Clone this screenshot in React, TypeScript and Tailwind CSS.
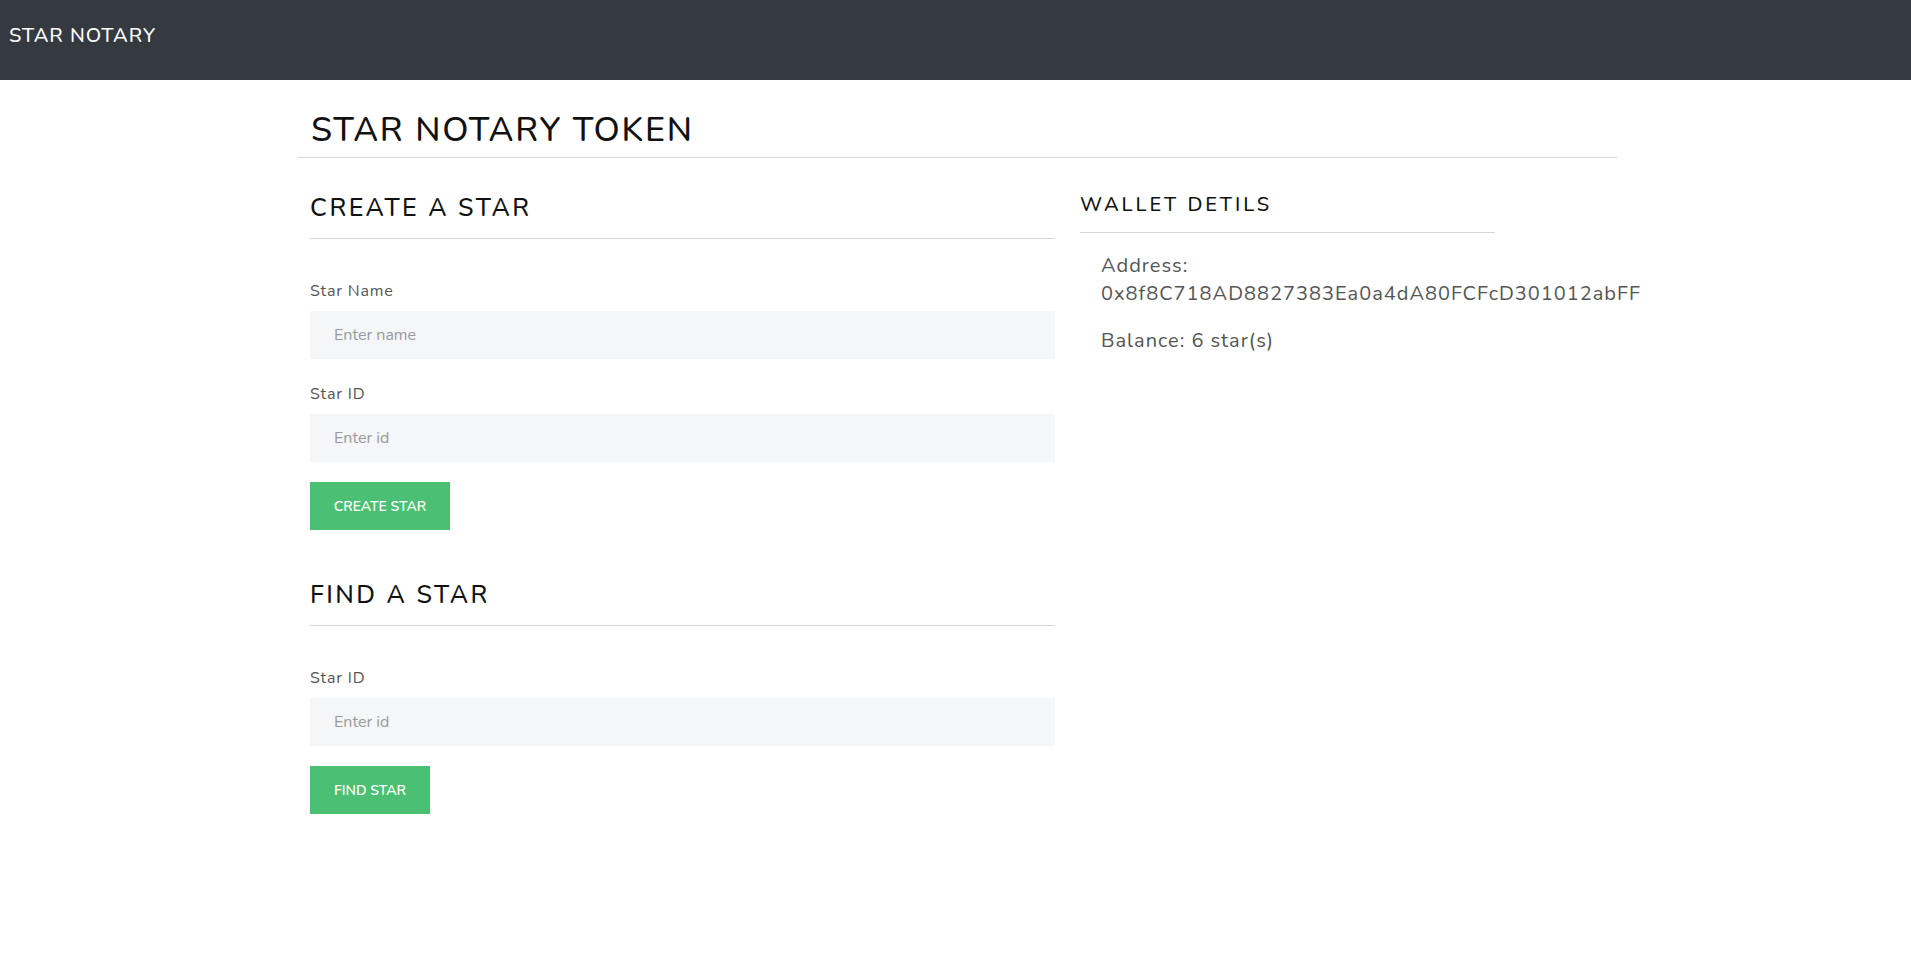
import { useState } from 'react';

const font = { fontFamily: 'Nunito, Lato, "Open Sans", sans-serif' };

function Field({ label, placeholder }: { label: string; placeholder: string }) {
  const [value, setValue] = useState('');
  return (
    <div className="flex flex-col">
      <label className="text-[16px] leading-[20px] text-[#555] tracking-[0.8px]">{label}</label>
      <input
        value={value}
        onChange={(e) => setValue(e.target.value)}
        placeholder={placeholder}
        className="mt-[10px] h-[48px] w-full bg-[#f5f6f8] px-[24px] text-[16px] text-[#555] placeholder:text-[#9a9a9a] outline-none"
      />
    </div>
  );
}

function SectionTitle({ children, top }: { children: string; top: string }) {
  return (
    <div className={`border-b border-[#d6d6d6] ${top}`}>
      <h2 className="text-[25px] leading-[30px] font-medium tracking-[2.5px] text-[#111] pb-[15px]">{children}</h2>
    </div>
  );
}

export default function App() {
  return (
    <div className="min-h-screen bg-white" style={font}>
      {/* navbar */}
      <nav className="h-[80px] bg-[#343a40] flex items-center px-[9px] pb-[8px]">
        <span className="text-white text-[20px] font-medium tracking-[1px]">STAR NOTARY</span>
      </nav>

      <main className="ml-[298px] w-[1319px]">
        <div className="border-b border-[#d6d6d6] px-[13px] pt-[30px] pb-[7px]">
          <h1 className="text-[34px] leading-[40px] font-medium tracking-[1.8px] text-[#111]">STAR NOTARY TOKEN</h1>
        </div>

        <div className="flex">
          {/* left column */}
          <div className="ml-[12px] w-[745px]">
            <SectionTitle top="pt-[35px]">CREATE A STAR</SectionTitle>
            <div className="mt-[42px] flex flex-col gap-[25px]">
              <Field label="Star Name" placeholder="Enter name" />
              <Field label="Star ID" placeholder="Enter id" />
            </div>
            <button className="mt-[20px] h-[48px] w-[140px] bg-[#4bbf73] text-white text-[14px] font-semibold">
              CREATE STAR
            </button>

            <SectionTitle top="pt-[50px]">FIND A STAR</SectionTitle>
            <div className="mt-[42px]">
              <Field label="Star ID" placeholder="Enter id" />
            </div>
            <button className="mt-[20px] h-[48px] w-[120px] bg-[#4bbf73] text-white text-[14px] font-semibold">
              FIND STAR
            </button>
          </div>

          {/* right column */}
          <div className="ml-[25px] w-[415px]">
            <div className="pt-[35px] border-b border-[#d6d6d6]">
              <h3 className="text-[20px] leading-[24px] font-medium tracking-[3px] text-[#111] pb-[15px]">WALLET DETILS</h3>
            </div>
            <div className="pl-[21px] pt-[19px] text-[20px] leading-[28px] tracking-[1px] text-[#555]">
              <p>Address:</p>
              <p className="whitespace-nowrap">0x8f8C718AD8827383Ea0a4dA80FCFcD301012abFF</p>
              <p className="mt-[19px]">Balance: 6 star(s)</p>
            </div>
          </div>
        </div>
      </main>
    </div>
  );
}
